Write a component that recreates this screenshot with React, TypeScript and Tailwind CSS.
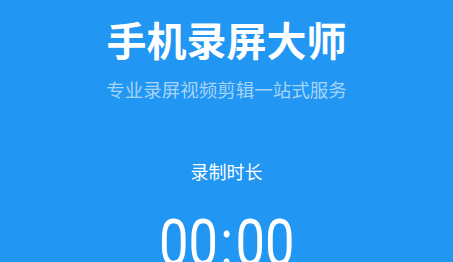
export default function App() {
  return (
    <div className="h-[262px] w-full overflow-hidden bg-[#2196f3] text-center text-white font-['Noto_Sans_CJK_SC',sans-serif]">
      <div className="pt-[19px]">
        <h1 className="text-[40px] font-bold leading-[40px]">手机录屏大师</h1>
        <p className="mt-[20px] text-[18.5px] leading-[20px] text-white/60">专业录屏视频剪辑一站式服务</p>
        <p className="mt-[63px] text-[18px] leading-[18px]">录制时长</p>
        <div className="mt-[32px] flex justify-center">
          <span className="inline-block origin-center scale-x-[0.82] font-['Roboto',sans-serif] text-[64px] font-normal leading-[64px]">
            00<span className="mx-[3px]">:</span>00
          </span>
        </div>
      </div>
    </div>
  )
}
